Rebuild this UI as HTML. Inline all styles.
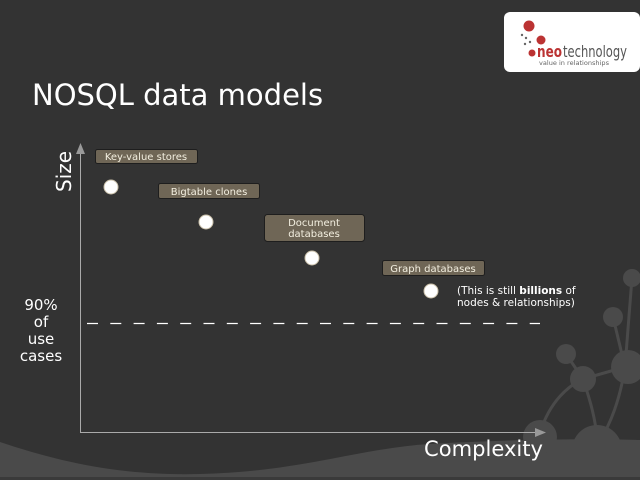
<!DOCTYPE html>
<html><head><meta charset="utf-8"><style>
html,body{margin:0;padding:0;background:#333;}
svg{display:block}
text{font-family:"DejaVu Sans","Liberation Sans",sans-serif;}
</style></head><body>
<svg width="640" height="480" viewBox="0 0 640 480" xmlns="http://www.w3.org/2000/svg">
<rect width="640" height="480" fill="#333"/>
<path d="M0 442 C60 462 120 476 200 474 C300 472 360 448 430 444 C500 440 580 438 640 440 L640 477 L0 477 Z" fill="#4a4a4a"/>
<rect y="477" width="640" height="3" fill="#3a3a3a"/>
<g stroke="#4a4a4a" stroke-width="3" fill="none">
<path d="M540 433 C550 400 570 385 583 379"/>
<path d="M583 379 L566 354"/>
<path d="M583 379 L625 367"/>
<path d="M583 379 C590 400 596 420 597 440"/>
<path d="M625 367 L613 317"/>
<path d="M625 367 L632 278"/>
<path d="M625 367 C620 400 610 425 600 440"/>
</g>
<g fill="#4a4a4a">
<circle cx="632" cy="278" r="9"/>
<circle cx="613" cy="317" r="10"/>
<circle cx="628" cy="367" r="17"/>
<circle cx="566" cy="354" r="10"/>
<circle cx="583" cy="379" r="13"/>
<circle cx="540" cy="437" r="17"/>
<circle cx="597" cy="450" r="25"/>
</g>
<rect x="504" y="12" width="136" height="60" rx="6" fill="#fff"/>
<circle cx="529" cy="26" r="5.5" fill="#b33"/>
<circle cx="541" cy="40" r="4.5" fill="#b33"/>
<circle cx="532" cy="53" r="3.5" fill="#b33"/>
<g fill="#666"><circle cx="522" cy="35" r="1.2"/><circle cx="526" cy="38" r="1.2"/><circle cx="530" cy="42" r="1.2"/><circle cx="525" cy="44" r="1.2"/></g>
<text x="537" y="57" font-size="16" fill="#b33" font-weight="bold" textLength="25" lengthAdjust="spacingAndGlyphs">neo</text>
<text x="563" y="57" font-size="16" fill="#555" textLength="64" lengthAdjust="spacingAndGlyphs">technology</text>
<text x="539" y="65" font-size="6" fill="#666" textLength="70" lengthAdjust="spacingAndGlyphs">value in relationships</text>
<text x="32" y="105" font-size="29" fill="#fff">NOSQL data models</text>
<line x1="80.5" y1="150" x2="80.5" y2="433" stroke="#aaa" stroke-width="1"/>
<polygon points="80.5,143 76,154 85,154" fill="#999"/>
<line x1="80" y1="432.5" x2="540" y2="432.5" stroke="#aaa" stroke-width="1"/>
<polygon points="546,432.5 535,428 535,437" fill="#999"/>
<text transform="translate(71,192) rotate(-90)" font-size="20" fill="#fff">Size</text>
<text x="424" y="456" font-size="21" fill="#fff" textLength="119" lengthAdjust="spacingAndGlyphs">Complexity</text>
<g font-size="15" fill="#fff" text-anchor="middle">
<text x="41" y="310">90%</text><text x="41" y="327">of</text><text x="41" y="344">use</text><text x="41" y="361">cases</text>
</g>
<line x1="87" y1="323.5" x2="540" y2="323.5" stroke="#fff" stroke-width="1.3" stroke-dasharray="11 12.3"/>
<g fill="#6f6656" stroke="#1e1e1e" stroke-width="1">
<rect x="95.5" y="149.5" width="102" height="14" rx="2"/>
<rect x="158.5" y="183.5" width="101" height="15" rx="2"/>
<rect x="264.5" y="214.5" width="100" height="27" rx="3"/>
<rect x="382.5" y="260.5" width="102" height="15" rx="2"/>
</g>
<g font-size="10" fill="#f3efe0" text-anchor="middle">
<text x="146" y="160">Key-value stores</text>
<text x="209" y="195">Bigtable clones</text>
<text x="314" y="226">Document</text>
<text x="314" y="237">databases</text>
<text x="433" y="272">Graph databases</text>
</g>
<g fill="#fff" stroke="#c9bfa8" stroke-width="1">
<circle cx="111" cy="187" r="7"/>
<circle cx="206" cy="222" r="7"/>
<circle cx="312" cy="258" r="7"/>
<circle cx="431" cy="291" r="7"/>
</g>
<g font-size="10.5" fill="#fff">
<text x="457" y="294">(This is still <tspan font-weight="bold">billions</tspan> of</text>
<text x="457" y="306">nodes &amp; relationships)</text>
</g>
</svg>
</body></html>
